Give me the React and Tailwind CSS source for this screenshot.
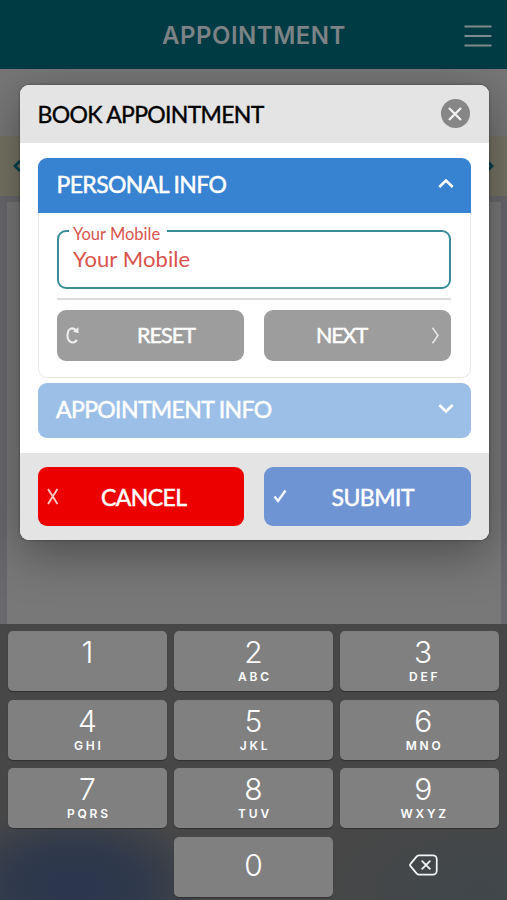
import React, { useState } from "react";

const keys = [
	["1", ""],
	["2", "ABC"],
	["3", "DEF"],
	["4", "GHI"],
	["5", "JKL"],
	["6", "MNO"],
	["7", "PQRS"],
	["8", "TUV"],
	["9", "WXYZ"],
];

const Chevron = ({ up }) => (
	<svg width="16" height="10" viewBox="0 0 16 10" fill="none" stroke="#fff" strokeWidth="2.6">
		<path d={up ? "M1.3 8 8 1.5l6.7 6.500" : "M1.3 1 8 7.500l6.700-6.500"} />
	</svg>
);

const Key = ({ digit, letters, last }) => (
	<button
		className={`h-[60px] rounded-[5px] bg-[#808081] shadow-[0_1px_1px_#303030] flex flex-col items-center text-white ${
			last ? "pl-[7px]" : ""
		}`}
	>
		<span className={`text-[30px] leading-[30px] font-[350] ${digit === "0" ? "mt-[13px]" : "mt-[6px]"}`}>
			{digit}
		</span>
		{letters && (
			<span className="mt-[4px] text-[12px] leading-[12px] font-semibold tracking-[2.8px] pl-[3px]">
				{letters}
			</span>
		)}
	</button>
);

const Keypad = () => (
	<div className="h-[276px] shrink-0 pt-[7px] px-2 bg-[#474747] bg-[radial-gradient(ellipse_135px_80px_at_75px_262px,#2c374d_20%,#303a4b_50%,#474747_100%,transparent_100%),radial-gradient(ellipse_160px_90px_at_480px_270px,#40474b,transparent)] font-['Inter',sans-serif]">
		<div className="grid grid-cols-3 gap-x-[7.5px] gap-y-[8.6px]">
			{keys.map(([digit, letters], i) => (
				<Key key={digit} digit={digit} letters={letters} last={i % 3 === 2} />
			))}
			<div />
			<Key digit="0" />
			<button className="flex items-center justify-center pl-[8px] pb-1">
				<svg width="29" height="22" viewBox="0 0 30 22" fill="none" stroke="#f4f4f4" strokeWidth="1.8" strokeLinejoin="round" strokeLinecap="round">
					<path d="M10.5 1h14.2a4 4 0 0 1 4 4v12a4 4 0 0 1-4 4H10.5c-1 0-1.8-.4-2.5-1.1L1.6 12.2a1.7 1.7 0 0 1 0-2.4L8 2.1C8.7 1.4 9.5 1 10.5 1Z" />
					<path d="m13.6 7 8 8m0-8-8 8" />
				</svg>
			</button>
		</div>
	</div>
);

const App = () => {
	const [mobile, setMobile] = useState("");

	return (
		<div className="relative w-full h-[900px] overflow-hidden flex flex-col bg-[#69696d]">
			<header className="h-[69px] shrink-0 bg-[#003b43] flex items-center justify-end px-[15px] pt-[2px]">
				<h1 className="flex-1 pl-[29px] text-center font-['Inter',sans-serif] font-semibold text-[24px] leading-none tracking-[0.5px] text-[#7c8285]">
					APPOINTMENT
				</h1>
				<svg width="28" height="24" viewBox="0 0 28 24" stroke="#7d8b90" strokeWidth="1.8">
					<path d="M.5 2.5h27M.5 12h27M.5 21.5h27" />
				</svg>
			</header>
			<div className="h-[67px] shrink-0 bg-[#767676]" />
			<div className="h-[60px] shrink-0 bg-[#747363] flex items-center justify-between px-[12px] text-[#00434d]">
				<svg width="10" height="14" viewBox="0 0 10 14" fill="none" stroke="currentColor" strokeWidth="2.8">
					<path d="M8 2 3 7l5 5" />
				</svg>
				<svg width="10" height="14" viewBox="0 0 10 14" fill="none" stroke="currentColor" strokeWidth="2.8">
					<path d="m2 2 5 5-5 5" />
				</svg>
			</div>
			<div className="flex-1 pl-[7px] pr-[6px] pt-[6px]">
				<div className="h-full bg-[#787878]" />
			</div>
			<Keypad />

			{/* booking dialog over the page */}
			<div className="absolute top-[84.5px] left-[19.5px] w-[469px] rounded-[9px] overflow-hidden bg-white shadow-[0_14px_48px_rgba(0,0,0,0.36),0_0_3px_rgba(0,0,0,0.4)] font-['Lato',sans-serif]">
				<div className="h-[58.5px] bg-[#e4e4e4] flex items-center justify-between pl-[18px] pr-[19px]">
					<h2 className="pt-[2px] text-[23px] leading-none text-black [-webkit-text-stroke:0.4px] tracking-[-0.68px]">
						BOOK APPOINTMENT
					</h2>
					<button className="w-[29px] h-[29px] rounded-full bg-[#868686] flex items-center justify-center">
						<svg width="14" height="14" viewBox="0 0 14 14" stroke="#f2f2f2" strokeWidth="2.3">
							<path d="m1 1 12 12M13 1 1 13" />
						</svg>
					</button>
				</div>

				<div className="px-[18px] py-[15px]">
					<button className="w-full h-[54.5px] rounded-t-[9px] bg-[#3782d1] flex items-center justify-between pl-[19px] pr-[17px] pb-[3px] text-white">
						<span className="pt-[2px] text-[23px] leading-none [-webkit-text-stroke:0.5px] tracking-[-0.62px]">PERSONAL INFO</span>
						<Chevron up />
					</button>
					<div className="h-[165px] rounded-b-[9px] border border-t-0 border-[#e8e8e8] px-[18.5px] pt-[8px]">
						<fieldset className="h-[68px] rounded-[9px] border-[2px] border-[#3a8c99] px-[10px]">
							<legend className="pl-[4px] pr-[7px] text-[16.5px] leading-[20px] text-[#d9534c]">
								<span className="relative top-[3px]">Your Mobile</span>
							</legend>
							<input
								className="block w-full h-[36px] px-[4px] text-[22px] leading-none tracking-[0.1px] outline-none text-[#d9534c] placeholder:text-[#d9534c]"
								placeholder="Your Mobile"
								value={mobile}
								onChange={(e) => setMobile(e.target.value)}
							/>
						</fieldset>
						<div className="mt-[9px] h-[2px] bg-[#dcdcdc]" />
						<div className="mt-[10px] grid grid-cols-2 gap-5 text-white text-[21.5px] leading-none">
							<button className="h-[51px] rounded-[9px] bg-[#9d9d9d] flex items-center pl-[9px]" onClick={() => setMobile("")}>
								<svg width="13" height="18" viewBox="0 0 13 18" fill="none" stroke="#ededed" strokeWidth="2.1">
									<path d="M11 14C7.500 18.500 1.500 16.500 1.500 9.500S6.500 .5 10 4.500" />
									<path d="M12.500 1v6.200L7 5.800Z" fill="#ededed" stroke="none" />
								</svg>
								<span className="flex-1 pl-[9px] pt-[2px] [-webkit-text-stroke:0.5px] tracking-[-0.9px]">RESET</span>
							</button>
							<button className="h-[51px] rounded-[9px] bg-[#9d9d9d] flex items-center pr-[11px]">
								<span className="flex-1 pr-[12px] pt-[2px] [-webkit-text-stroke:0.5px] tracking-[-1.1px]">NEXT</span>
								<svg width="9" height="17" viewBox="0 0 9 17" fill="none" stroke="#e6e6e6" strokeWidth="1.6">
									<path d="m1.5 .8 5.5 7.7-5.5 7.7" />
								</svg>
							</button>
						</div>
					</div>
					<button className="mt-[5.5px] w-full h-[54.5px] rounded-[9px] bg-[#9bbfe7] flex items-center justify-between pl-[18.5px] pr-[17px] pb-[3px] text-white">
						<span className="text-[23px] leading-none [-webkit-text-stroke:0.5px] pt-px tracking-[-0.62px]">APPOINTMENT INFO</span>
						<Chevron />
					</button>
				</div>

				<div className="h-[87.5px] bg-[#e4e4e4] px-[18px] pt-[14.5px] grid grid-cols-2 gap-5 text-white text-[23px] leading-none">
					<button className="h-[58.5px] rounded-[9px] bg-[#ec0000] flex items-center pl-[9px]">
						<svg width="12" height="17" viewBox="0 0 12 17" fill="none" stroke="#ffc9c4" strokeWidth="1.9">
							<path d="m1 1 9.5 15M10.5 1 1 16" />
						</svg>
						<span className="flex-1 pr-[15px] pt-[2px] [-webkit-text-stroke:0.5px] tracking-[-0.6px]">CANCEL</span>
					</button>
					<button className="h-[58.5px] rounded-[9px] bg-[#6f94d4] flex items-center pl-[9px]">
						<svg width="14" height="14" viewBox="0 0 14 14" fill="none" stroke="#f0f5ff" strokeWidth="2.4">
							<path d="M1.5 7.5 5 12l7.5-10.5" />
						</svg>
						<span className="flex-1 pr-[12px] pt-[2px] [-webkit-text-stroke:0.5px] tracking-[-0.5px]">SUBMIT</span>
					</button>
				</div>
			</div>
		</div>
	);
};

export default App;
